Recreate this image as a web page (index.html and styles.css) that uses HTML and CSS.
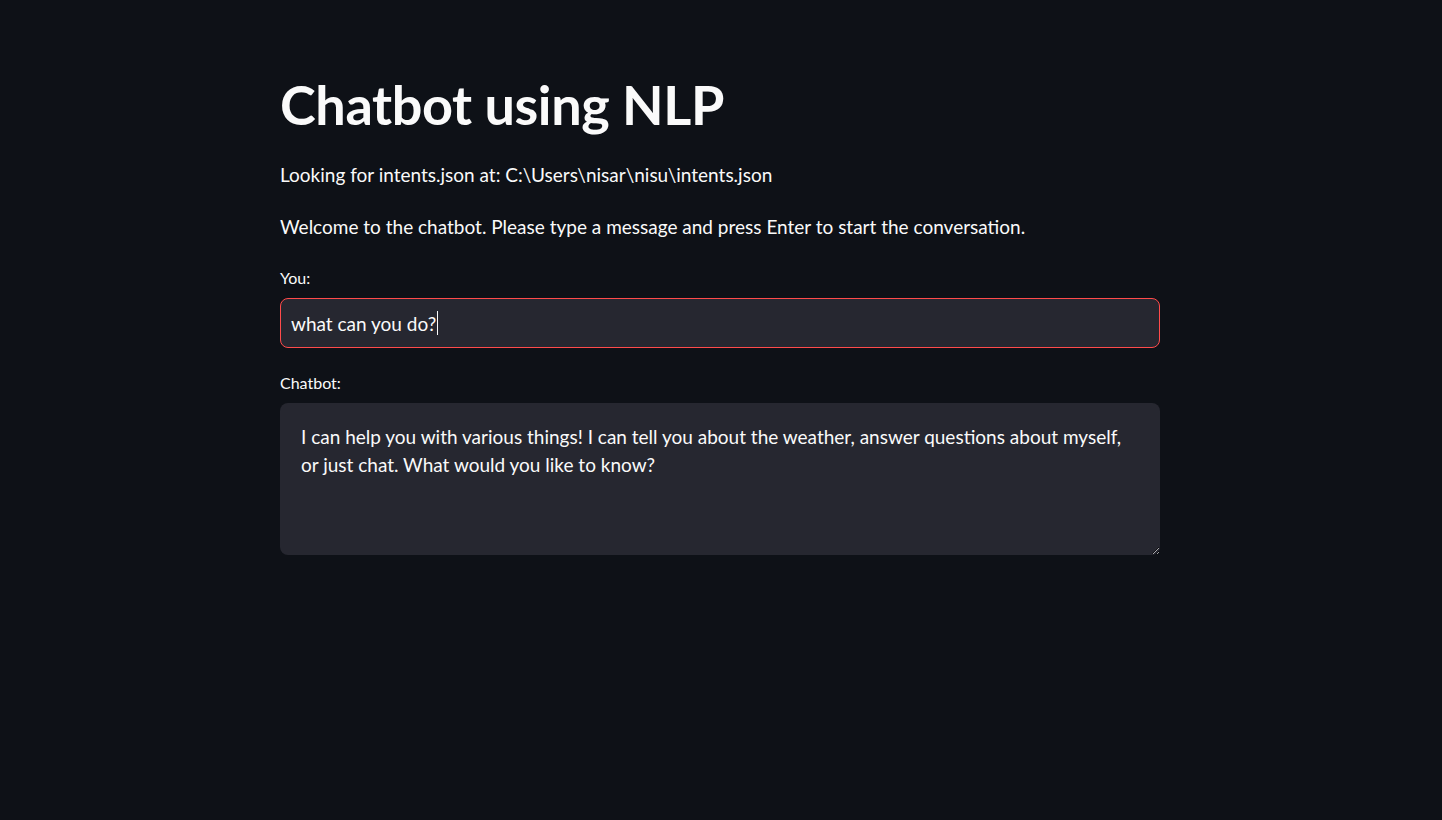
FILE: index.html
```html
<!DOCTYPE html>
<html lang="en">
<head>
<meta charset="utf-8">
<title>Chatbot using NLP</title>
<link rel="stylesheet" href="styles.css">
</head>
<body>
<main class="main">
  <h1 class="title">Chatbot using NLP</h1>
  <p class="para">Looking for intents.json at: C:\Users\nisar\nisu\intents.json</p>
  <p class="para">Welcome to the chatbot. Please type a message and press Enter to start the conversation.</p>
  <div class="field field-you">
    <label class="label">You:</label>
    <div class="input">what can you do?<span class="caret"></span></div>
  </div>
  <div class="field field-bot">
    <label class="label">Chatbot:</label>
    <textarea class="textarea" readonly>I can help you with various things! I can tell you about the weather, answer questions about myself, or just chat. What would you like to know?</textarea>
  </div>
</main>
</body>
</html>
```
FILE: styles.css
```css
html, body {
  margin: 0;
  padding: 0;
  background: #0e1117;
  color: #fafafa;
  font-family: "Lato", "Liberation Sans", sans-serif;
  color-scheme: dark;
}
.main {
  width: 880px;
  margin: 0 auto;
  padding-top: 71px;
  padding-right: 2px;
  display: flex;
  flex-direction: column;
}
.title {
  margin: 0;
  font-size: 54px;
  font-weight: 700;
  line-height: 68px;
  letter-spacing: -0.4px;
}
.para {
  margin: 0;
  font-size: 19px;
  line-height: 28px;
}
.title + .para { margin-top: 22px; }
.para + .para { margin-top: 24px; }
.field {
  display: flex;
  flex-direction: column;
}
.field-you { margin-top: 27px; }
.field-bot { margin-top: 25px; }
.label {
  font-size: 16px;
  line-height: 20px;
  margin-bottom: 10px;
}
.input {
  box-sizing: border-box;
  height: 50px;
  background: #262730;
  border: 1px solid #ff4b4b;
  border-radius: 8px;
  padding: 0 10px;
  font-size: 19px;
  display: flex;
  align-items: center;
}
.caret {
  display: inline-block;
  width: 1px;
  height: 24px;
  background: #fafafa;
  margin-left: 1px;
}
.textarea {
  box-sizing: border-box;
  height: 152px;
  background: #262730;
  border: none;
  border-radius: 8px;
  padding: 20px 20px 20px 21px;
  color: #fafafa;
  font-family: inherit;
  font-size: 19px;
  line-height: 28px;
  resize: vertical;
  outline: none;
}
```
